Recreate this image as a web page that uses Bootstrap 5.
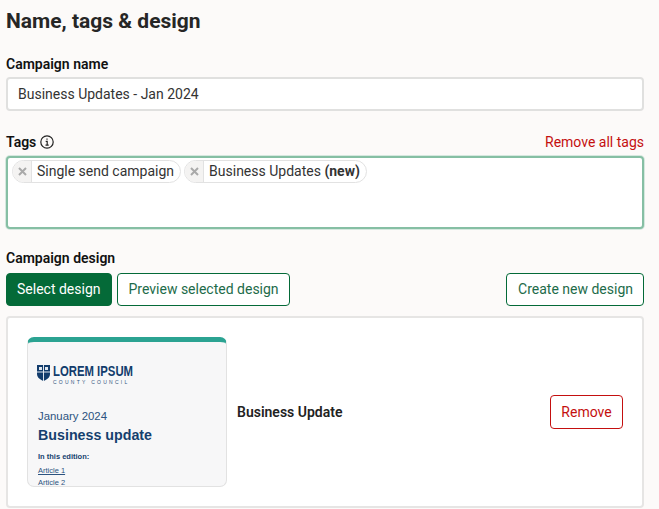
<!DOCTYPE html>
<html lang="en">
<head>
<meta charset="utf-8">
<title>Name, tags &amp; design</title>
<link href="https://cdn.jsdelivr.net/npm/bootstrap@5.3.0/dist/css/bootstrap.min.css" rel="stylesheet">
<style>
html,body{height:509px;overflow:hidden}
body{background:#fcfaf9;color:#212529;font-family:Roboto,"Liberation Sans",sans-serif;font-size:14px;}
.page{padding:8px 15px 0 6px}
.ttl{font-size:21px;font-weight:700;line-height:26px;margin:0 0 22px;color:#262626}
.lbl{font-size:14px;font-weight:600;line-height:17px;color:#111;margin:0}
.name-input{display:block;width:100%;height:34px;margin-top:4px;border:2px solid #e0e0df;border-radius:4px;padding:0 10px;background:#fff;font-size:14px;color:#333;font-family:inherit}
.tag-row{margin-top:21px;height:20px}
.rm-all{color:#c40f0f;font-size:14px;text-decoration:none}
.tag-box{height:73px;margin-top:4px;border:2px solid #86bfa4;box-shadow:0 0 0 1px #d6e8df;border-radius:4px;background:#fff;padding:2px 4px;gap:3px}
.chip{height:23px;border:1px solid #e2e2e2;border-radius:12px;background:#fff;overflow:hidden;color:#333;line-height:21px;font-size:14px}
.chip-x{width:19px;background:#f4f3f2;border-right:1px solid #e2e2e2}
.chip-t{padding:0 6px 0 5px;white-space:nowrap}
.sec{margin-top:21px}
.act{margin-top:6px;gap:5px}
.bt{height:33px;padding:0 10px 0 11px;font-size:14px;line-height:31px;border-radius:4px;border:1px solid #046a38}
.bt.bt-solid{background:#046a38;color:#fff;padding:0 10px}
.bt-line{background:#fff;color:#1d6b4a}
.design{margin-top:10px;height:192px;background:#fff;border:2px solid #e6e5e4;border-radius:4px;padding:19px 19px 0}
.thumb{width:200px;height:150px;flex:none;border:1px solid #e2e2e2;border-top:5px solid #2ba392;border-radius:7px;background:#f7f7f8;overflow:hidden;padding:21px 10px 0;font-family:"Liberation Sans",sans-serif;color:#153f6e}
.lg{height:22px;gap:3px}
.shield{flex:none;margin:2px 0 0 -1px}
.lg-a{font-size:14px;font-weight:700;line-height:16px;color:#123c6c;transform:scaleX(.81);transform-origin:left;white-space:nowrap}
.lg-b{font-size:5px;line-height:6px;letter-spacing:2.25px;white-space:nowrap;color:#33557e}
.th-date{font-size:11.4px;line-height:15px;margin-top:24px;color:#2c5380}
.th-head{font-size:14.25px;font-weight:700;line-height:18px;margin-top:2px}
.th-sub{font-size:7.5px;font-weight:700;line-height:9px;margin-top:8px}
.th-lnk{display:block;font-size:7.5px;line-height:11.5px;color:#2c5380;text-decoration:underline}
.th-lnk.first{margin-top:4px}
.dname{font-size:14px;font-weight:600;color:#222;margin-left:10px}
.bt-rm{height:34px;width:73px;padding:0;border:1px solid #c40f0f;color:#c40f0f;background:#fff;border-radius:4px;font-size:14px}
.drow{height:150px}
</style>
</head>
<body>
<div class="page">
  <h1 class="ttl">Name, tags &amp; design</h1>
  <label class="lbl d-block" for="cn">Campaign name</label>
  <input id="cn" class="name-input" value="Business Updates - Jan 2024">

  <div class="tag-row d-flex justify-content-between align-items-center">
    <span class="lbl d-flex align-items-center gap-1">Tags
      <svg width="14" height="14" viewBox="0 0 14 14" fill="none" stroke="#222" aria-hidden="true"><circle cx="7" cy="7" r="6.2" stroke-width="1.2"/><path d="M7 3.4v1.4M5.7 6.3H7.2V10M5.5 10.2h3.2" stroke-width="1.2"/></svg>
    </span>
    <a href="#" class="rm-all">Remove all tags</a>
  </div>
  <div class="tag-box d-flex align-items-start">
    <span class="chip d-inline-flex">
      <span class="chip-x d-flex align-items-center justify-content-center"><svg width="9" height="9" viewBox="0 0 9 9" aria-hidden="true"><path d="M1 1l7 7M8 1L1 8" stroke="#a9a9a9" stroke-width="2"/></svg></span>
      <span class="chip-t">Single send campaign</span>
    </span>
    <span class="chip d-inline-flex">
      <span class="chip-x d-flex align-items-center justify-content-center"><svg width="9" height="9" viewBox="0 0 9 9" aria-hidden="true"><path d="M1 1l7 7M8 1L1 8" stroke="#a9a9a9" stroke-width="2"/></svg></span>
      <span class="chip-t">Business Updates <b>(new)</b></span>
    </span>
  </div>

  <div class="sec lbl">Campaign design</div>
  <div class="act d-flex">
    <button class="btn bt bt-solid" type="button">Select design</button>
    <button class="btn bt bt-line" type="button">Preview selected design</button>
    <button class="btn bt bt-line ms-auto" type="button">Create new design</button>
  </div>

  <div class="design d-flex align-items-start">
    <div class="thumb">
      <div class="lg d-flex">
        <svg class="shield" width="13" height="16" viewBox="0 0 13 16" aria-hidden="true"><path d="M0 0h13v9c0 3.500-3 5.600-6.500 7C3 14.600 0 12.500 0 9z" fill="#123c6c"/><path d="M2 2h3v3H2zM8 2h3v3H8z" fill="#dfe6ee"/><path d="M6.500 0v16M0 7h13" stroke="#dfe6ee" stroke-width="1"/></svg>
        <div>
          <div class="lg-a">LOREM IPSUM</div>
          <div class="lg-b">COUNTY COUNCIL</div>
        </div>
      </div>
      <div class="th-date">January 2024</div>
      <div class="th-head">Business update</div>
      <div class="th-sub">In this edition:</div>
      <a class="th-lnk first" href="#">Article 1</a>
      <a class="th-lnk" href="#">Article 2</a>
    </div>
    <div class="drow d-flex flex-grow-1 align-items-center justify-content-between">
      <span class="dname">Business Update</span>
      <button class="bt-rm" type="button">Remove</button>
    </div>
  </div>
</div>
</body>
</html>
